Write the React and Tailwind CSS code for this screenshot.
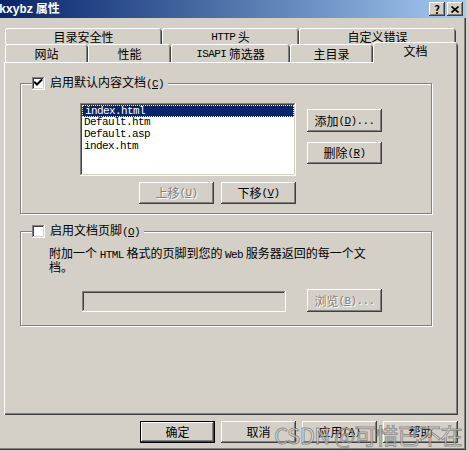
const raised =
  'shadow-[inset_-1px_-1px_#404040,inset_1px_1px_#ffffff,inset_-2px_-2px_#808080,inset_2px_2px_#d4d0c8]';
const sunken =
  'shadow-[inset_-1px_-1px_#ffffff,inset_1px_1px_#808080,inset_-2px_-2px_#d4d0c8,inset_2px_2px_#404040]';
const tabEdge =
  'shadow-[inset_1px_0_#ffffff,inset_0_1px_#ffffff,inset_-1px_0_#404040,inset_-2px_0_#808080]';

// SimSun-like half-width latin
function A({ children }) {
  return (
    <span className="font-['Liberation_Mono',monospace] text-[11px] tracking-[-0.6px]">
      {children}
    </span>
  );
}

function Key({ k }) {
  return (
    <A>
      (<u className="underline-offset-1">{k}</u>)
    </A>
  );
}

function Button({ children, disabled, isDefault, className = '' }) {
  const text = disabled ? 'text-[#808080] [text-shadow:1px_1px_0_#ffffff]' : 'text-black';
  if (isDefault) {
    return (
      <div className={`border border-black bg-[#d4d0c8] ${className}`}>
        <div className={`flex h-full w-full items-center justify-center ${raised} ${text}`}>
          {children}
        </div>
      </div>
    );
  }
  return (
    <div className={`flex items-center justify-center bg-[#d4d0c8] ${raised} ${text} ${className}`}>
      {children}
    </div>
  );
}

function CheckBox({ checked }) {
  return (
    <div className={`h-[13px] w-[13px] shrink-0 bg-white ${sunken}`}>
      {checked && (
        <svg width="13" height="13" viewBox="0 0 13 13">
          <path d="M3 5.5 L5 7.5 L9.5 3" stroke="#000" strokeWidth="2" fill="none" strokeLinecap="square" />
        </svg>
      )}
    </div>
  );
}

function Tab({ w, children, selected }) {
  if (selected) {
    return (
      <div
        className={`relative z-10 -mb-px flex h-[21px] items-start justify-center rounded-t-[3px] bg-[#d4d0c8] pt-[3px] ${tabEdge}`}
        style={{ width: w }}
      >
        {children}
      </div>
    );
  }
  return (
    <div
      className={`flex h-full items-center justify-center rounded-t-[3px] bg-[#d4d0c8] pt-[1px] ${tabEdge}`}
      style={{ width: w }}
    >
      {children}
    </div>
  );
}

function Group({ checked, label, children }) {
  return (
    <fieldset className="w-[412px] border border-[#808080] shadow-[inset_1px_1px_0_#ffffff,1px_1px_0_#ffffff]">
      <legend className="ml-[11px] flex items-center bg-[#d4d0c8] pr-[4px]">
        <CheckBox checked={checked} />
        <span className="ml-[5px] whitespace-nowrap">{label}</span>
      </legend>
      {children}
    </fieldset>
  );
}

const docs = ['index.html', 'Default.htm', 'Default.asp', 'index.htm'];

export default function App() {
  return (
    <div className="relative h-[451px] w-[469px] overflow-hidden bg-[#d4d0c8] font-['Noto_Sans_CJK_SC','Noto_Sans',sans-serif] text-[12px] leading-[12px] text-black">
      <div className="h-[450px] w-[466px] shadow-[inset_-1px_-1px_#404040,inset_-2px_-2px_#808080]">
        {/* caption */}
        <div className="flex h-[18px] items-center bg-gradient-to-r from-[#0a246a] to-[#a6caf0] pr-[3px]">
          <span className="-ml-[1px] whitespace-nowrap font-bold text-white">
            <span className="font-['Liberation_Mono',monospace] text-[12px] tracking-[-0.4px]">kxybz</span> 属性
          </span>
          <div className="ml-auto flex gap-[2px]">
            <Button className="h-[14px] w-[16px] pb-[1px] text-[11px] font-bold">?</Button>
            <Button className="h-[14px] w-[16px]">
              <svg width="8" height="7" viewBox="0 0 8 7">
                <path d="M0.5 0.5 L7.5 6.5 M7.5 0.5 L0.5 6.5" stroke="#000" strokeWidth="1.6" />
              </svg>
            </Button>
          </div>
        </div>

        {/* tabs */}
        <div className="ml-[5px] mt-[10px] flex h-[16px]">
          <Tab w={157}>目录安全性</Tab>
          <Tab w={137}>
            <A>HTTP</A>&nbsp;头
          </Tab>
          <Tab w={157}>自定义错误</Tab>
        </div>
        <div className="ml-[5px] flex h-[18px] items-end">
          <Tab w={83}>网站</Tab>
          <Tab w={83}>性能</Tab>
          <Tab w={119}>
            <A>ISAPI</A>&nbsp;筛选器
          </Tab>
          <Tab w={83}>主目录</Tab>
          <Tab w={85} selected>
            文档
          </Tab>
        </div>

        {/* page */}
        <div className="ml-[4px] h-[353px] w-[454px] pl-[16px] pt-[14px] shadow-[inset_1px_1px_#ffffff,inset_-1px_-1px_#404040,inset_-2px_-2px_#808080]">
          <Group
            checked
            label={
              <>
                启用默认内容文档<Key k="C" />
              </>
            }
          >
            <div className="pb-[9px] pl-[59px] pt-[13px]">
              <div className="flex">
                <div className={`h-[73px] w-[216px] bg-white p-[2px] ${sunken}`}>
                  {docs.map((d, i) => (
                    <div
                      key={d}
                      className={`h-[12px] pl-[2px] font-['Liberation_Mono',monospace] text-[11px] leading-[11px] tracking-[-0.6px] ${
                        i === 0 ? 'border border-dotted border-[#f4f0b8] bg-[#0a246a] pl-[1px] text-white' : ''
                      }`}
                    >
                      {d}
                    </div>
                  ))}
                </div>
                <div className="ml-[11px] flex flex-col gap-[10px] pt-[6px]">
                  <Button className="h-[23px] w-[75px]">
                    添加<Key k="D" />
                    <A>...</A>
                  </Button>
                  <Button className="h-[22px] w-[75px]">
                    删除<Key k="R" />
                  </Button>
                </div>
              </div>
              <div className="mt-[6px] flex w-[216px] justify-end gap-[7px]">
                <Button disabled className="h-[22px] w-[75px]">
                  上移<Key k="U" />
                </Button>
                <Button className="h-[22px] w-[75px]">
                  下移<Key k="V" />
                </Button>
              </div>
            </div>
          </Group>

          <div className="mt-[10px]">
            <Group
              label={
                <>
                  启用文档页脚<Key k="O" />
                </>
              }
            >
              <div className="pb-[13px] pt-[9px]">
                <p className="pl-[28px]">
                  附加一个 <A>HTML</A> 格式的页脚到您的 <A>Web</A> 服务器返回的每一个文
                  <br />
                  档。
                </p>
                <div className="mt-[16px] flex items-end pl-[61px]">
                  <div className={`h-[21px] w-[204px] bg-[#d4d0c8] ${sunken}`} />
                  <Button disabled className="ml-[21px] h-[23px] w-[75px]">
                    浏览<Key k="B" />
                    <A>...</A>
                  </Button>
                </div>
              </div>
            </Group>
          </div>
        </div>

        {/* dialog buttons */}
        <div className="mt-[6px] flex gap-[6px] pl-[140px]">
          <Button isDefault className="h-[22px] w-[75px]">
            确定
          </Button>
          <Button className="h-[22px] w-[75px]">取消</Button>
          <Button className="h-[22px] w-[75px]">
            应用<Key k="A" />
          </Button>
          <Button className="h-[22px] w-[75px]">帮助</Button>
        </div>
      </div>

      {/* site watermark over the button row */}
      <div className="pointer-events-none absolute bottom-[4px] right-[7px] whitespace-nowrap text-[22px] leading-[26px] tracking-[-0.5px] text-[#f2f2f2]/60 [-webkit-text-stroke:1px_rgba(100,100,100,0.65)]">
        CSDN @可惜已不在
      </div>
    </div>
  );
}
